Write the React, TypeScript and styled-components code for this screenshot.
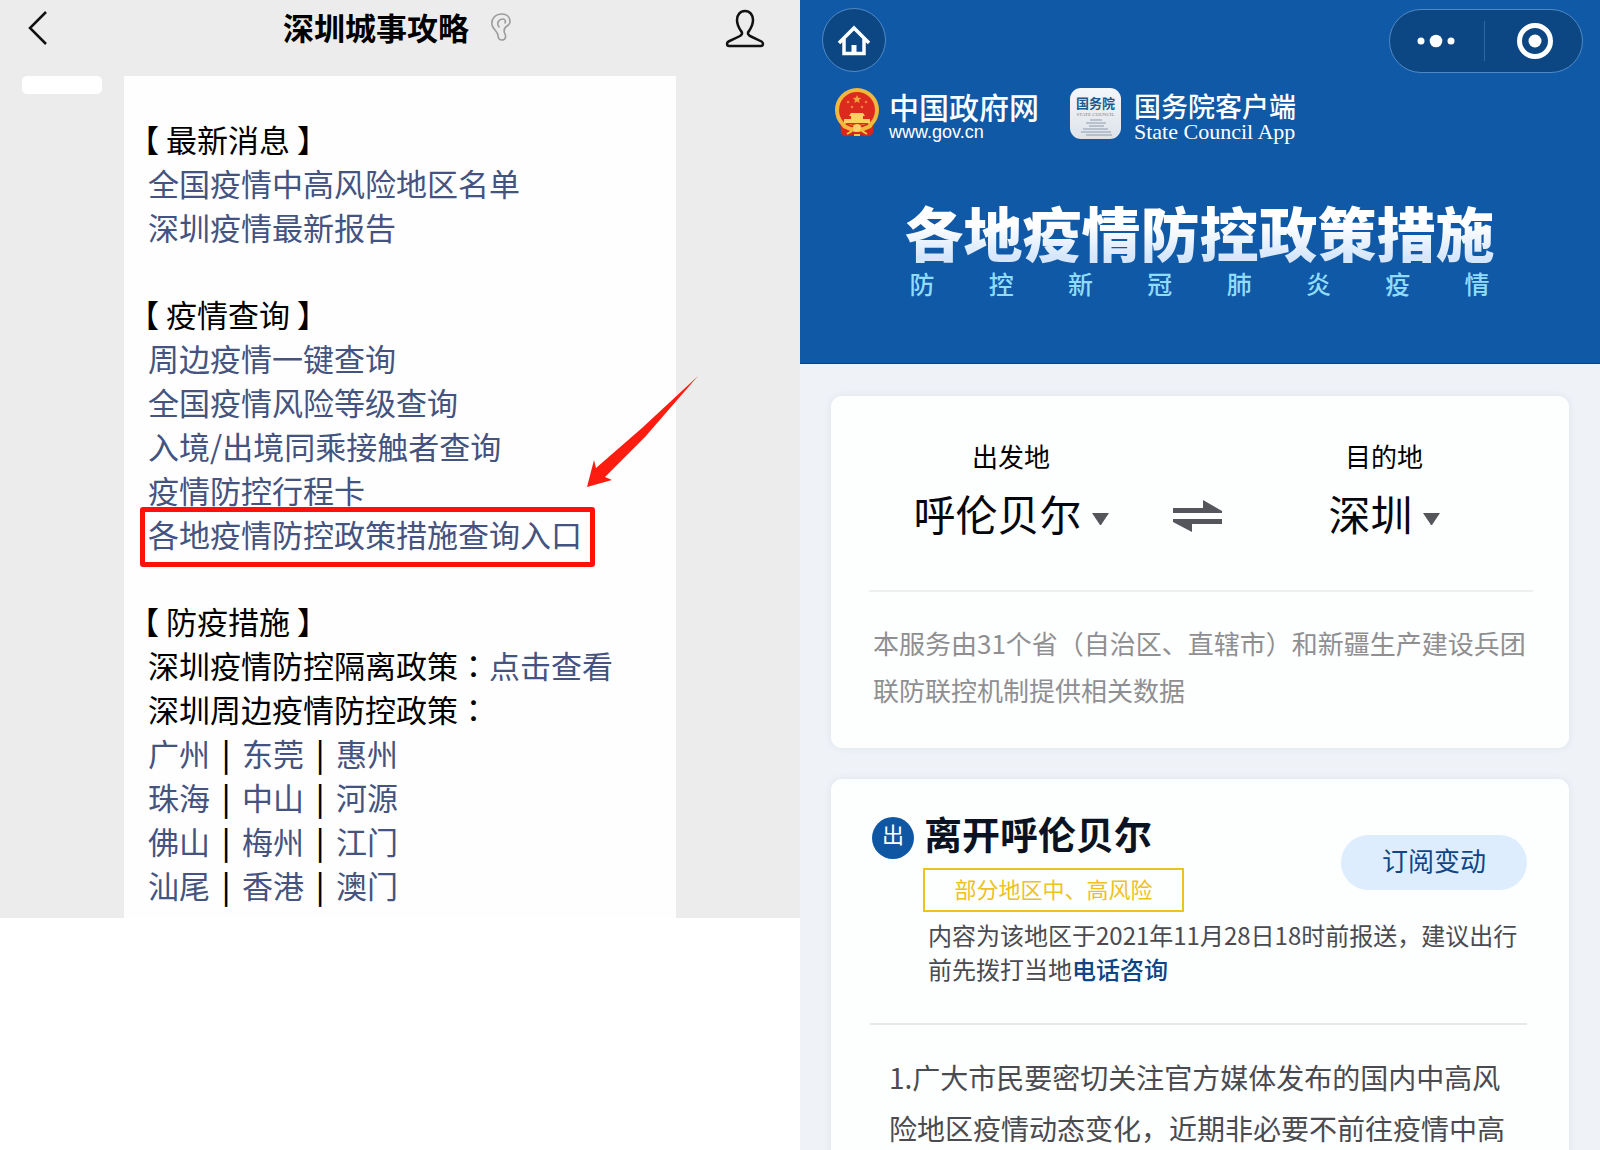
import React from "react";
import styled, { createGlobalStyle } from "styled-components";

const Global = createGlobalStyle`
  *, *::before, *::after { box-sizing: border-box; }
  body { margin: 0; background: #fff; }
  h1, h2, h3, p, ul { margin: 0; padding: 0; }
  ul { list-style: none; }
  a { text-decoration: none; }
  button { border: 0; padding: 0; background: none; font: inherit; color: inherit; cursor: pointer; }
`;

const Page = styled.div`
  display: grid;
  grid-template-columns: 1fr 1fr;
  align-items: start;
  height: 100vh;
  overflow: hidden;
  font-family: "Noto Sans CJK SC", sans-serif;
  color: #000;
`;

/* Chat side */

const Chat = styled.section`
  background: #ececec;
`;

const ChatBar = styled.header`
  display: grid;
  grid-template-columns: 124px 1fr 124px;
  align-items: start;
  height: 76px;
`;

const BackButton = styled.button`
  justify-self: start;
  margin: 11px 0 0 27px;
  line-height: 0;
`;

const ProfileButton = styled.button`
  justify-self: end;
  margin: 9px 35px 0 0;
  line-height: 0;
`;

const ChatTitle = styled.h1`
  display: flex;
  justify-content: center;
  align-items: center;
  gap: 22px;
  padding-right: 6px;
  font-size: 31px;
  font-weight: 700;
  line-height: 54px;
`;

const ChatBody = styled.div`
  display: grid;
  grid-template-columns: 102px minmax(0, 1fr);
  column-gap: 22px;
  padding: 0 124px 0 0;
`;

const Avatar = styled.div`
  justify-self: end;
  width: 80px;
  height: 18px;
  border-radius: 5px;
  background: #fff;
`;

const Bubble = styled.article`
  display: flex;
  flex-direction: column;
  gap: 43px;
  padding: 41px 24px 11px;
  background: #fefefe;
  font-size: 31px;
  line-height: 44px;
`;

const GroupTitle = styled.h2`
  margin-left: -20px;
  font-size: 31px;
  font-weight: 400;
`;

const ChatLink = styled.a`
  color: #44537f;
`;

const MarkedLink = styled(ChatLink)`
  position: relative;
  display: inline-block;
  &::after {
    content: "";
    position: absolute;
    inset: -5px -13px -11px -8px;
    border: 5px solid #fd1109;
    border-radius: 3px;
  }
`;

const Pointer = styled.svg`
  position: absolute;
  left: 100%;
  bottom: 67px;
  margin-left: 4px;
`;

const MarkedRow = styled.li`
  position: relative;
  width: fit-content;
`;

const Colon = styled.span`
  font-family: "Noto Sans CJK TC", sans-serif;
`;

const CityRow = styled.li`
  display: flex;
`;

const Bar = styled.span`
  width: 32px;
  text-align: center;
  font-weight: 500;
`;

/* Mini program side */

const Mini = styled.section`
  height: 100vh;
  overflow-y: auto;
  scrollbar-width: none;
  background: #eff3f8;
`;

const Hero = styled.header`
  height: 364px;
  padding: 8px 17px 0 22px;
  border-bottom: 1px solid #0b447f;
  background: #1059a6;
  color: #fff;
`;

const Controls = styled.div`
  display: flex;
  justify-content: space-between;
`;

const HomeButton = styled.button`
  display: grid;
  place-items: center;
  width: 64px;
  height: 64px;
  border: 1px solid #4f8ac6;
  border-radius: 50%;
  background: #0c4783;
`;

const Capsule = styled.div`
  display: flex;
  align-items: center;
  width: 194px;
  height: 64px;
  margin-top: 1px;
  border: 1px solid #4f8ac6;
  border-radius: 32px;
  background: #0c4783;
`;

const CapsuleButton = styled.button`
  display: grid;
  flex: 1;
  place-items: center;
  height: 40px;
  & + & {
    padding-left: 4px;
    border-left: 1px solid #2c68a5;
  }
`;

const Brands = styled.div`
  display: flex;
  gap: 31px;
  padding: 15px 0 0 12px;
`;

const Brand = styled.a<{ $gap: number }>`
  display: flex;
  gap: ${(p) => p.$gap}px;
  color: #fff;
`;

const BrandText = styled.span`
  display: flex;
  flex-direction: column;
`;

const BrandName = styled.span<{ $size: number }>`
  font-size: ${(p) => p.$size}px;
  font-weight: 500;
  line-height: 36px;
`;

const BrandUrl = styled.span`
  font-family: "Liberation Sans", sans-serif;
  font-size: 18px;
  line-height: 16px;
`;

const BrandLatin = styled.span`
  font-family: "Liberation Serif", serif;
  font-size: 22px;
  line-height: 16px;
`;

const AppIcon = styled.span`
  display: flex;
  flex-direction: column;
  align-items: center;
  width: 51px;
  height: 51px;
  padding-top: 7px;
  border-radius: 11px;
  background: linear-gradient(#f4f7fa, #dde3e9);
  color: #1c5a8c;
  font-size: 13px;
  font-weight: 700;
  line-height: 16px;
`;

const AppIconSub = styled.span`
  color: #8a7f80;
  font-family: "Liberation Serif", serif;
  font-size: 5px;
  font-weight: 400;
  line-height: 7px;
`;

const Banner = styled.div`
  width: 596px;
  margin: 55px auto 0;
  padding-right: 6px;
`;

const BannerTitle = styled.h2`
  width: max-content;
  background: linear-gradient(#fff 40%, #d5e6fb 85%);
  background-clip: text;
  color: transparent;
  font-size: 59px;
  font-weight: 900;
  line-height: 74px;
`;

const BannerSub = styled.p`
  display: flex;
  justify-content: space-between;
  padding: 0 5px;
  color: #8fdcfb;
  font-size: 25px;
  font-weight: 500;
  line-height: 28px;
`;

const Cards = styled.main`
  display: flex;
  flex-direction: column;
  gap: 31px;
  padding: 32px 31px;
`;

const Card = styled.section`
  border-radius: 11px;
  background: #fdfefe;
  box-shadow: 0 0 8px rgba(60, 70, 90, 0.08);
`;

const RouteCard = styled(Card)`
  padding: 40px 36px 35px 38px;
`;

const Route = styled.div`
  display: grid;
  grid-template-columns: 284px 1fr 298px;
  padding-bottom: 44px;
  border-bottom: 2px solid #eeeff1;
`;

const Place = styled.div`
  display: flex;
  flex-direction: column;
  align-items: center;
`;

const PlaceLabel = styled.label`
  font-size: 26px;
  line-height: 40px;
`;

const PlacePick = styled.span`
  display: flex;
  align-items: center;
  gap: 9px;
  margin-top: 4px;
`;

const PlaceSelect = styled.select`
  appearance: none;
  margin: 0;
  padding: 0;
  border: 0;
  background: transparent;
  color: #05070f;
  font-family: inherit;
  font-size: 42px;
  line-height: 66px;
`;

const Caret = styled.svg`
  margin-top: 12px;
  pointer-events: none;
`;

const SwapButton = styled.button`
  align-self: end;
  justify-self: center;
  height: 60px;
  margin-left: 6px;
  line-height: 0;
`;

const Note = styled.p`
  padding: 27px 0 0 4px;
  color: #8f8f92;
  font-size: 26px;
  line-height: 47px;
`;

const PolicyCard = styled(Card)`
  padding: 34px 42px 40px 39px;
`;

const PolicyHead = styled.div`
  display: grid;
  grid-template-columns: 42px minmax(0, 1fr) auto;
  column-gap: 10px;
  padding-bottom: 37px;
  border-bottom: 2px solid #e6e8ea;
`;

const Badge = styled.span`
  width: 42px;
  height: 42px;
  margin: 4px 0 0 2px;
  border-radius: 50%;
  background: #0f57a3;
  color: #fff;
  text-align: center;
  font-size: 22px;
  line-height: 32px;
`;

const PolicyTitle = styled.h3`
  padding-left: 2px;
  color: #0b1322;
  font-size: 38px;
  font-weight: 700;
  line-height: 40px;
`;

const RiskTag = styled.p`
  width: 261px;
  margin: 15px 0 0 1px;
  padding-bottom: 4px;
  border: 2px solid #ebc31c;
  color: #ebc31c;
  text-align: center;
  font-size: 22px;
  line-height: 36px;
`;

const Subscribe = styled.button`
  width: 186px;
  height: 55px;
  margin-top: 22px;
  padding-bottom: 6px;
  border-radius: 28px;
  background: #ddedfd;
  color: #0d4587;
  font-size: 26px;
  line-height: 44px;
`;

const Report = styled.p`
  grid-column: 2 / -1;
  padding: 6px 0 0 6px;
  color: #4a4b50;
  font-size: 24px;
  line-height: 34px;
`;

const PhoneLink = styled.a`
  color: #0d4587;
  font-weight: 500;
`;

const Policy = styled.p`
  padding: 27px 8px 0 19px;
  color: #4a4b50;
  font-size: 28px;
  line-height: 51px;
`;

const cities = [
  ["广州", "东莞", "惠州"],
  ["珠海", "中山", "河源"],
  ["佛山", "梅州", "江门"],
  ["汕尾", "香港", "澳门"],
];

const Emblem = () => (
  <svg width="46" height="49" viewBox="0 0 46 49" aria-hidden="true">
    <path d="M6 33h34l-1 12q-3 4-8 3l-8-2-8 2q-6 1-8-3z" fill="#d8261c" />
    <circle cx="23" cy="22" r="22" fill="#f0b93c" />
    <circle cx="23" cy="22" r="18" fill="#dc2a1e" />
    <path d="M23 7l1.200 2.800 3 .2-2.300 2 .8 3-2.700-1.600-2.700 1.600.8-3-2.300-2 3-.2z" fill="#f0a63a" />
    <g fill="#f0823a">
      <circle cx="14" cy="14" r="1.300" />
      <circle cx="32" cy="14" r="1.300" />
      <circle cx="18" cy="19" r="1.300" />
      <circle cx="28" cy="19" r="1.300" />
    </g>
    <path d="M17 25h12l2 3h-2v3h7v4H10v-4h7v-3h-2z" fill="#f9d262" />
    <path d="M5 33q18 8 36 0l-4 7q-14 7-28 0z" fill="#f0b93c" />
    <path d="M12 36q11 6 22 0" fill="none" stroke="#d8261c" strokeWidth="1.500" />
    <circle cx="23" cy="40" r="4" fill="#f9d262" />
    <path d="M13 46l5-3M33 46l-5-3M20 47h6" stroke="#f6c945" strokeWidth="2" />
  </svg>
);

const Triangle = () => (
  <Caret width="17" height="12" viewBox="0 0 17 12" aria-hidden="true">
    <path d="M0 0h17L9 12H8z" fill="#55555c" />
  </Caret>
);

export default function App() {
  return (
    <>
      <Global />
      <Page>
        <Chat>
          <ChatBar>
            <BackButton aria-label="返回">
              <svg width="21" height="34" viewBox="0 0 21 34" fill="none" stroke="#111" strokeWidth="2.500">
                <path d="M19 1L3 17l16 16" />
              </svg>
            </BackButton>
            <ChatTitle>
              深圳城事攻略
              <svg width="20" height="28" viewBox="0 0 20 28" fill="none" stroke="#9c9c9c" strokeWidth="1.600" strokeLinecap="round">
                <path d="M19 9C19 3 15 1 11 1 4 1 0 6 1 12c1 4 5 6 6 10 0 3 1 5 4 5 4 0 4-4 3-6-2-4-1-6 2-8 2-1 3-2 3-4zM8 14C5 10 8 6 12 6c2 0 3 2 2 4" />
              </svg>
            </ChatTitle>
            <ProfileButton aria-label="账号资料">
              <svg width="40" height="39" viewBox="0 0 40 39" fill="none" stroke="#111" strokeWidth="2.500" strokeLinejoin="round">
                <path d="M20 2c-5 0-8 4-8 9 0 5 2 8 4 11 2 2 1 4-2 5.500L3.500 32.500c-2 1-2 4.500.5 4.500h32c2.500 0 2.500-3.500.5-4.500L26 27.500c-3-1.500-4-3.500-2-5.500 2-3 4-6 4-11 0-5-3-9-8-9z" />
              </svg>
            </ProfileButton>
          </ChatBar>
          <ChatBody>
            <Avatar />
            <Bubble>
              <section>
                <GroupTitle>【 最新消息 】</GroupTitle>
                <ul>
                  <li><ChatLink href="#">全国疫情中高风险地区名单</ChatLink></li>
                  <li><ChatLink href="#">深圳疫情最新报告</ChatLink></li>
                </ul>
              </section>
              <section>
                <GroupTitle>【 疫情查询 】</GroupTitle>
                <ul>
                  <li><ChatLink href="#">周边疫情一键查询</ChatLink></li>
                  <li><ChatLink href="#">全国疫情风险等级查询</ChatLink></li>
                  <li><ChatLink href="#">入境/出境同乘接触者查询</ChatLink></li>
                  <li><ChatLink href="#">疫情防控行程卡</ChatLink></li>
                  <MarkedRow>
                    <MarkedLink href="#">各地疫情防控政策措施查询入口</MarkedLink>
                    <Pointer width="114" height="114" viewBox="0 0 114 114" aria-hidden="true">
                      <path d="M1 112L8 85l2 8 46-40L112 1 59 62 19 102l7 3z" fill="#fd1c10" />
                    </Pointer>
                  </MarkedRow>
                </ul>
              </section>
              <section>
                <GroupTitle>【 防疫措施 】</GroupTitle>
                <p>深圳疫情防控隔离政策<Colon>：</Colon><ChatLink href="#">点击查看</ChatLink></p>
                <p>深圳周边疫情防控政策<Colon>：</Colon></p>
                <ul>
                  {cities.map((row) => (
                    <CityRow key={row[0]}>
                      {row.map((city, i) => (
                        <React.Fragment key={city}>
                          {i > 0 && <Bar>|</Bar>}
                          <ChatLink href="#">{city}</ChatLink>
                        </React.Fragment>
                      ))}
                    </CityRow>
                  ))}
                </ul>
              </section>
            </Bubble>
          </ChatBody>
        </Chat>

        <Mini>
          <Hero>
            <Controls>
              <HomeButton aria-label="首页">
                <svg width="34" height="32" viewBox="0 0 34 32" fill="none" stroke="#fff" strokeWidth="3.500">
                  <path d="M2 19L17 4l15 15M7 15v14.500h20V15" />
                  <path d="M17 29v-8" strokeWidth="5" />
                </svg>
              </HomeButton>
              <Capsule>
                <CapsuleButton aria-label="更多">
                  <svg width="40" height="14" viewBox="0 0 40 14" fill="#fff">
                    <circle cx="4" cy="7" r="3.500" />
                    <circle cx="19" cy="7" r="6.300" />
                    <circle cx="34" cy="7" r="3.500" />
                  </svg>
                </CapsuleButton>
                <CapsuleButton aria-label="关闭">
                  <svg width="36" height="36" viewBox="0 0 36 36">
                    <circle cx="18" cy="18" r="15.500" fill="none" stroke="#fff" strokeWidth="5" />
                    <circle cx="18" cy="18" r="6.500" fill="#fff" />
                  </svg>
                </CapsuleButton>
              </Capsule>
            </Controls>
            <Brands>
              <Brand href="#" $gap={9}>
                <Emblem />
                <BrandText>
                  <BrandName $size={30}>中国政府网</BrandName>
                  <BrandUrl>www.gov.cn</BrandUrl>
                </BrandText>
              </Brand>
              <Brand href="#" $gap={13}>
                <AppIcon>
                  国务院
                  <AppIconSub>STATE COUNCIL</AppIconSub>
                  <svg width="38" height="18" viewBox="0 0 38 18" fill="none" stroke="#a9b4c2" strokeWidth="1.500" aria-hidden="true">
                    <path d="M13 2h12M9 5h20M12 8h15M6 11h25M4 14h30M9 17h26" />
                  </svg>
                </AppIcon>
                <BrandText>
                  <BrandName $size={27}>国务院客户端</BrandName>
                  <BrandLatin>State Council App</BrandLatin>
                </BrandText>
              </Brand>
            </Brands>
            <Banner>
              <BannerTitle>各地疫情防控政策措施</BannerTitle>
              <BannerSub>
                {[..."防控新冠肺炎疫情"].map((ch) => (
                  <span key={ch}>{ch}</span>
                ))}
              </BannerSub>
            </Banner>
          </Hero>

          <Cards>
            <RouteCard>
              <Route>
                <Place>
                  <PlaceLabel htmlFor="from">出发地</PlaceLabel>
                  <PlacePick>
                    <PlaceSelect id="from"><option>呼伦贝尔</option></PlaceSelect>
                    <Triangle />
                  </PlacePick>
                </Place>
                <SwapButton aria-label="交换">
                  <svg width="50" height="32" viewBox="0 0 50 32" fill="#55555c">
                    <path d="M1 8h30V0l19 11v2H1zM50 19H1v3l19 10v-8h30z" />
                  </svg>
                </SwapButton>
                <Place>
                  <PlaceLabel htmlFor="to">目的地</PlaceLabel>
                  <PlacePick>
                    <PlaceSelect id="to"><option>深圳</option></PlaceSelect>
                    <Triangle />
                  </PlacePick>
                </Place>
              </Route>
              <Note>本服务由31个省（自治区、直辖市）和新疆生产建设兵团联防联控机制提供相关数据</Note>
            </RouteCard>

            <PolicyCard>
              <PolicyHead>
                <Badge>出</Badge>
                <div>
                  <PolicyTitle>离开呼伦贝尔</PolicyTitle>
                  <RiskTag>部分地区中、高风险</RiskTag>
                </div>
                <Subscribe>订阅变动</Subscribe>
                <Report>
                  内容为该地区于2021年11月28日18时前报送，建议出行前先拨打当地<PhoneLink href="#">电话咨询</PhoneLink>
                </Report>
              </PolicyHead>
              <Policy>
                1.广大市民要密切关注官方媒体发布的国内中高风险地区疫情动态变化，近期非必要不前往疫情中高
              </Policy>
            </PolicyCard>
          </Cards>
        </Mini>
      </Page>
    </>
  );
}
